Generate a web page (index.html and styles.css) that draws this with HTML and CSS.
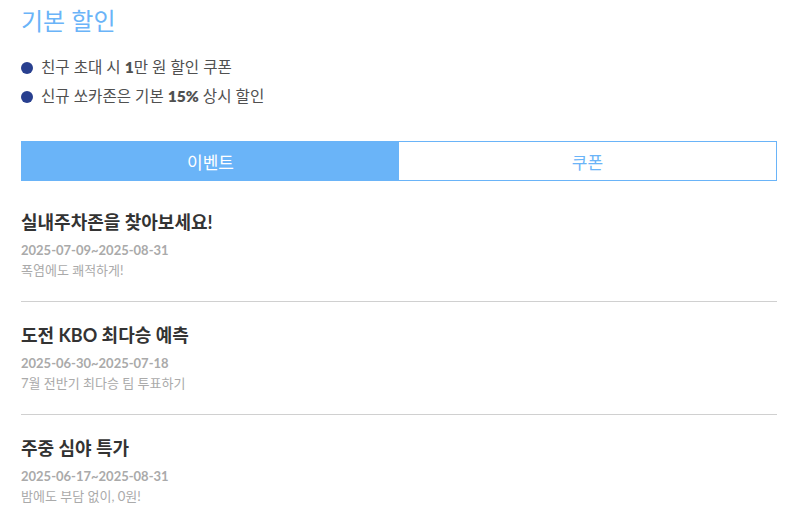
FILE: index.html
```html
<!DOCTYPE html>
<html lang="ko">
<head>
<meta charset="utf-8">
<link rel="stylesheet" href="styles.css">
</head>
<body>
<div class="page">
  <h1 class="title">기본 할인</h1>
  <ul class="bullets">
    <li><span class="dot"></span><span class="text">친구 초대 시 <b>1</b>만 원 할인 쿠폰</span></li>
    <li><span class="dot"></span><span class="text">신규 쏘카존은 기본 <b>15%</b> 상시 할인</span></li>
  </ul>
  <div class="tabs">
    <div class="tab active">이벤트</div>
    <div class="tab">쿠폰</div>
  </div>
  <div class="list">
    <div class="item">
      <div class="item-title">실내주차존을 찾아보세요!</div>
      <div class="item-date">2025-07-09~2025-08-31</div>
      <div class="item-desc">폭염에도 쾌적하게!</div>
    </div>
    <div class="item">
      <div class="item-title">도전 KBO 최다승 예측</div>
      <div class="item-date">2025-06-30~2025-07-18</div>
      <div class="item-desc">7월 전반기 최다승 팀 투표하기</div>
    </div>
    <div class="item">
      <div class="item-title">주중 심야 특가</div>
      <div class="item-date">2025-06-17~2025-08-31</div>
      <div class="item-desc">밤에도 부담 없이, 0원!</div>
    </div>
  </div>
</div>
</body>
</html>
```
FILE: styles.css
```css
* { box-sizing: border-box; }
html, body { margin: 0; padding: 0; background: #fff; }
body {
  font-family: Lato, "Noto Sans CJK KR", sans-serif;
  color: #333;
}
.page { padding: 4px 15px 0 21px; }
.title {
  margin: 0;
  font-size: 24px;
  font-weight: 400;
  line-height: 34px;
  color: #6ab4f8;
}
.bullets {
  list-style: none;
  margin: 15px 0 0;
  padding: 0;
}
.bullets li {
  display: flex;
  align-items: center;
  height: 29px;
  font-size: 15.6px;
  line-height: 29px;
  color: #505050;
}
.bullets b { font-weight: 800; }
.dot {
  width: 12px;
  height: 12px;
  border-radius: 50%;
  background: #283f8f;
  margin-right: 8px;
  flex: none;
}
.tabs {
  display: flex;
  margin-top: 30px;
  height: 40px;
  border: 1px solid #6ab4f8;
}
.tab {
  flex: 1;
  display: flex;
  align-items: center;
  justify-content: center;
  font-size: 17px;
  font-weight: 400;
  color: #6ab4f8;
  background: #fff;
}
.tab.active {
  background: #6ab4f8;
  color: #fff;
}
.list { margin-top: 8px; }
.item {
  padding: 20px 0 22px;
  border-bottom: 1px solid #d0d0d0;
}
.item:last-child { border-bottom: none; }
.item-title {
  font-size: 18px;
  font-weight: 700;
  line-height: 26px;
  color: #333;
}
.item-date {
  margin-top: 6px;
  font-size: 13px;
  font-weight: 700;
  line-height: 18px;
  color: #aaa;
}
.item-desc {
  margin-top: 2px;
  font-size: 13px;
  line-height: 18px;
  color: #aaa;
}
```
